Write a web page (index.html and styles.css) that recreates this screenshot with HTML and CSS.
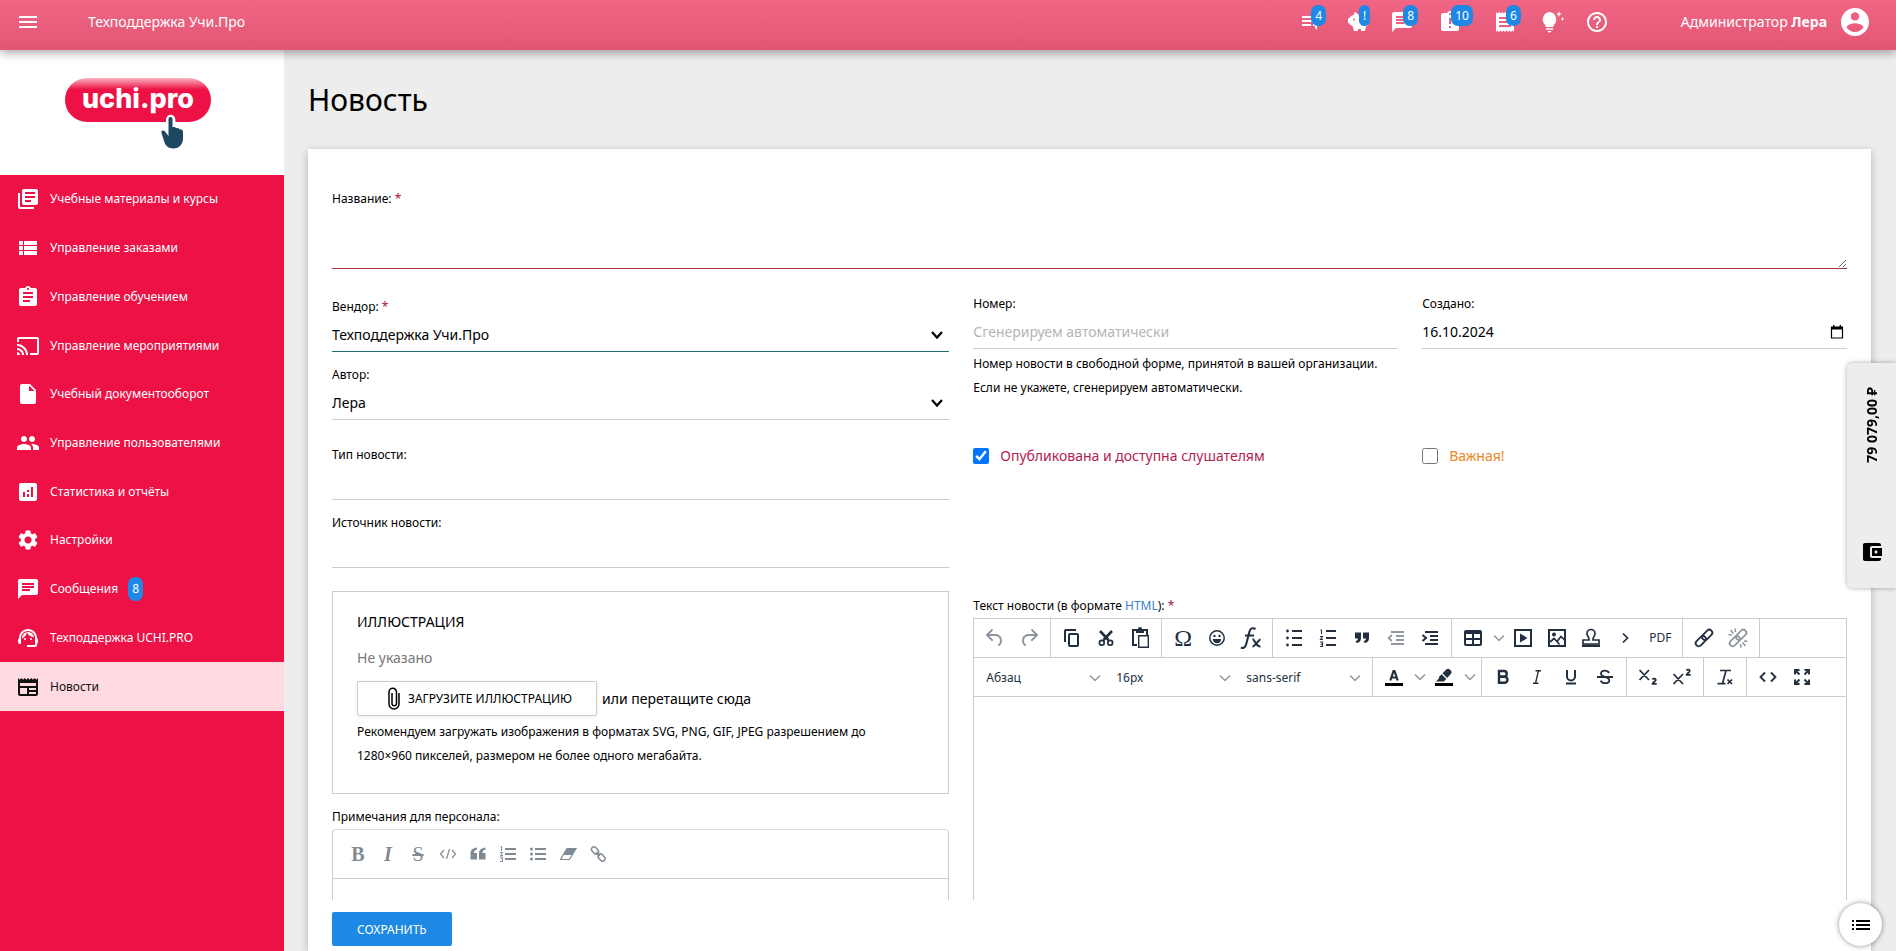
FILE: index.html
```html
<!DOCTYPE html>
<html lang="ru">
<head>
<meta charset="utf-8">
<title>Новость — Техподдержка Учи.Про</title>
<link rel="stylesheet" href="styles.css">
</head>
<body>
<svg class="sprite" aria-hidden="true">
  <symbol id="chat" viewBox="0 0 24 24"><path d="M20 2H4c-1.1 0-2 .9-2 2v18l4-4h14c1.1 0 2-.9 2-2V4c0-1.1-.9-2-2-2zM6 9h12v2H6V9zm8 5H6v-2h8v2zm4-6H6V6h12v2z"/></symbol>
  <symbol id="chevron" viewBox="0 0 12 12"><path d="M1 3.500l5 5 5-5" fill="none" stroke="currentColor" stroke-width="1.500"/></symbol>
  <symbol id="chevron-bold" viewBox="0 0 12 12"><path d="M1 3l5 5.500 5-5.500" fill="none" stroke="currentColor" stroke-width="2.200"/></symbol>
  <symbol id="link" viewBox="0 0 24 24"><g transform="rotate(-45 12 12)" fill="none" stroke="currentColor" stroke-width="1.800"><rect x="1.500" y="9" width="12" height="6" rx="3"/><rect x="10.500" y="9" width="12" height="6" rx="3"/></g></symbol>
</svg>

<header class="topbar">
  <button class="plain menu-button" type="button" aria-label="Меню"><svg class="icon" viewBox="0 0 24 24"><path d="M3 18h18v-2H3v2zm0-5h18v-2H3v2zm0-7v2h18V6H3z"/></svg></button>
  <a class="brand" href="#">Техподдержка Учи.Про</a>
  <nav class="tools" aria-label="Уведомления">
    <a class="tool" href="#"><svg class="icon" viewBox="0 0 24 24"><path d="M4 6h13v2H4zm0 4h13v2H4zm0 4h9v2H4zm11 0h5v2h-1v4l-2-2v-2h-2z"/></svg><span class="badge">4</span></a>
    <a class="tool" href="#"><svg class="icon" viewBox="0 0 24 24"><path d="M2 9.500c0-.8.500-1.500 1.500-1.700C4.500 6 6 5.200 8 5V3.500C8 2.500 9.200 2 10 2.700L13 5h3c3 0 5 2 5 5h1v5l-2 1.500-1 4.500h-4v-2h-3v2H8l-1.500-5C4.500 15 3.800 14.500 3.500 13.500L2 13z"/><circle cx="8" cy="9.500" r="1" fill="#e75f7e"/></svg><span class="badge">!</span></a>
    <a class="tool" href="#"><svg class="icon"><use href="#chat"/></svg><span class="badge">8</span></a>
    <a class="tool" href="#"><svg class="icon" viewBox="0 0 24 24"><path d="M19 3h-4.180C14.400 1.840 13.300 1 12 1s-2.400.84-2.820 2H5c-1.100 0-2 .9-2 2v14c0 1.100.9 2 2 2h14c1.100 0 2-.9 2-2V5c0-1.100-.9-2-2-2zm-6 15h-2v-2h2v2zm0-4h-2V8h2v6zm-1-9c-.55 0-1-.45-1-1s.45-1 1-1 1 .45 1 1-.45 1-1 1z"/></svg><span class="badge">10</span></a>
    <a class="tool" href="#"><svg class="icon" viewBox="0 0 24 24"><path d="M18 17H6v-2h12v2zm0-4H6v-2h12v2zm0-4H6V7h12v2zM3 22l1.500-1.500L6 22l1.500-1.500L9 22l1.500-1.500L12 22l1.500-1.500L15 22l1.500-1.500L18 22l1.500-1.500L21 22V2l-1.500 1.500L18 2l-1.500 1.500L15 2l-1.500 1.500L12 2l-1.500 1.500L9 2 7.500 3.500 6 2 4.500 3.500 3 2v20z"/></svg><span class="badge">6</span></a>
    <a class="tool" href="#" aria-label="Идеи"><svg class="icon" viewBox="0 0 24 24"><path d="M8.500 2a7.500 7.500 0 0 0-4 13.200V17h8v-1.800A7.500 7.500 0 0 0 8.500 2zM5 18.200h7v1.500H5zM6.500 21h4c-.5 1-1 1.500-2 1.500s-1.500-.5-2-1.500zM18 1l.8 2.200L21 4l-2.200.8L18 7l-.8-2.200L15 4l2.200-.8zM21.500 7l.6 1.400 1.400.6-1.400.6-.6 1.400-.6-1.400-1.400-.6 1.400-.6z"/></svg></a>
    <a class="tool" href="#" aria-label="Помощь"><svg class="icon" viewBox="0 0 24 24"><path d="M11 18h2v-2h-2v2zm1-16C6.480 2 2 6.480 2 12s4.480 10 10 10 10-4.480 10-10S17.520 2 12 2zm0 18c-4.410 0-8-3.590-8-8s3.590-8 8-8 8 3.590 8 8-3.590 8-8 8zm0-14c-2.210 0-4 1.790-4 4h2c0-1.100.9-2 2-2s2 .9 2 2c0 2-3 1.750-3 5h2c0-2.250 3-2.500 3-5 0-2.210-1.790-4-4-4z"/></svg></a>
  </nav>
  <a class="account" href="#"><span>Администратор <b>Лера</b></span><svg class="avatar" viewBox="2 2 20 20"><path d="M12 2C6.480 2 2 6.480 2 12s4.480 10 10 10 10-4.480 10-10S17.520 2 12 2zm0 3c1.660 0 3 1.340 3 3s-1.340 3-3 3-3-1.340-3-3 1.340-3 3-3zm0 14.200c-2.500 0-4.710-1.280-6-3.220.03-1.990 4-3.080 6-3.080 1.990 0 5.970 1.090 6 3.080-1.290 1.940-3.500 3.220-6 3.220z"/></svg></a>
</header>

<div class="layout">
  <aside class="sidebar">
    <a class="logo" href="#"><span class="logo-pill">uchi.pro</span>
      <svg class="logo-hand" viewBox="0 0 24 36"><path d="M8 14V5.500a2.700 2.700 0 0 1 5.400 0V12" fill="none" stroke="#fff" stroke-width="4"/><path d="M8.500 5a2 2 0 0 1 4 0v8.500c1-.8 3-.6 3.600.8 1.200-.7 3-.2 3.400 1.200 1.600-.5 3.500.5 3.500 2.500v6c0 6-3.500 10.500-9.500 10.500C8 34.500 5 31 4 27L1.500 19c-.4-1.600.2-2.500 1.300-2.500 1.200 0 2 .6 2.600 1.600l3.100 4z" fill="#1d4861"/></svg></a>
    <nav class="side-nav">
      <a href="#"><svg class="icon" viewBox="0 0 24 24"><path d="M4 6H2v14c0 1.100.9 2 2 2h14v-2H4V6zm16-4H8c-1.100 0-2 .9-2 2v12c0 1.100.9 2 2 2h12c1.100 0 2-.9 2-2V4c0-1.100-.9-2-2-2zm-1 9H9V9h10v2zm-4 4H9v-2h6v2zm4-8H9V5h10v2z"/></svg>Учебные материалы и курсы</a>
      <a href="#"><svg class="icon" viewBox="0 0 24 24"><path d="M3 14h4v-4H3v4zm0 5h4v-4H3v4zM3 9h4V5H3v4zm5 5h13v-4H8v4zm0 5h13v-4H8v4zM8 5v4h13V5H8z"/></svg>Управление заказами</a>
      <a href="#"><svg class="icon" viewBox="0 0 24 24"><path d="M19 3h-4.180C14.400 1.840 13.300 1 12 1c-1.300 0-2.400.84-2.820 2H5c-1.100 0-2 .9-2 2v14c0 1.100.9 2 2 2h14c1.100 0 2-.9 2-2V5c0-1.100-.9-2-2-2zm-7 0c.55 0 1 .45 1 1s-.45 1-1 1-1-.45-1-1 .45-1 1-1zm2 14H7v-2h7v2zm3-4H7v-2h10v2zm0-4H7V7h10v2z"/></svg>Управление обучением</a>
      <a href="#"><svg class="icon" viewBox="0 0 24 24"><path d="M21 3H3c-1.100 0-2 .9-2 2v3h2V5h18v14h-7v2h7c1.100 0 2-.9 2-2V5c0-1.100-.9-2-2-2zM1 18v3h3c0-1.660-1.340-3-3-3zm0-4v2c2.760 0 5 2.240 5 5h2c0-3.870-3.130-7-7-7zm0-4v2c4.970 0 9 4.030 9 9h2c0-6.080-4.930-11-11-11z"/></svg>Управление мероприятиями</a>
      <a href="#"><svg class="icon" viewBox="0 0 24 24"><path d="M6 2c-1.100 0-2 .9-2 2v16c0 1.100.9 2 2 2h12c1.100 0 2-.9 2-2V8l-6-6H6zm7 7V3.500L18.500 9H13z"/></svg>Учебный документооборот</a>
      <a href="#"><svg class="icon" viewBox="0 0 24 24"><path d="M16 11c1.660 0 3-1.340 3-3s-1.340-3-3-3-3 1.340-3 3 1.340 3 3 3zm-8 0c1.660 0 3-1.340 3-3S9.660 5 8 5 5 6.340 5 8s1.340 3 3 3zm0 2c-2.330 0-7 1.170-7 3.500V19h14v-2.500c0-2.330-4.670-3.500-7-3.500zm8 0c-.29 0-.62.02-.97.05 1.160.84 1.970 1.970 1.970 3.450V19h6v-2.500c0-2.330-4.670-3.500-7-3.500z"/></svg>Управление пользователями</a>
      <a href="#"><svg class="icon" viewBox="0 0 24 24"><path d="M19 3H5c-1.100 0-2 .9-2 2v14c0 1.100.9 2 2 2h14c1.100 0 2-.9 2-2V5c0-1.100-.9-2-2-2zM9 17H7v-5h2v5zm4 0h-2v-3h2v3zm0-5h-2v-2h2v2zm4 5h-2V7h2v10z"/></svg>Статистика и отчёты</a>
      <a href="#"><svg class="icon" viewBox="0 0 24 24"><path d="M19.140 12.940c.04-.3.06-.61.06-.94 0-.32-.02-.64-.07-.94l2.030-1.580c.18-.14.23-.41.12-.61l-1.920-3.320c-.12-.22-.37-.29-.59-.22l-2.390.96c-.5-.38-1.030-.7-1.620-.94l-.36-2.540c-.04-.24-.24-.41-.48-.41h-3.840c-.24 0-.43.17-.47.41l-.36 2.540c-.59.24-1.130.57-1.620.94l-2.390-.96c-.22-.08-.47 0-.59.22L2.740 8.870c-.12.21-.08.47.12.61l2.030 1.580c-.05.3-.09.63-.09.94s.02.64.07.94l-2.030 1.580c-.18.14-.23.41-.12.61l1.920 3.320c.12.22.37.29.59.22l2.390-.96c.5.38 1.030.7 1.620.94l.36 2.540c.05.24.24.41.48.41h3.840c.24 0 .44-.17.47-.41l.36-2.540c.59-.24 1.130-.56 1.620-.94l2.390.96c.22.08.47 0 .59-.22l1.920-3.320c.12-.22.07-.47-.12-.61l-2.010-1.580zM12 15.600c-1.980 0-3.600-1.620-3.600-3.600s1.620-3.600 3.600-3.600 3.600 1.620 3.600 3.600-1.620 3.600-3.600 3.600z"/></svg>Настройки</a>
      <a href="#"><svg class="icon"><use href="#chat"/></svg>Сообщения<span class="badge badge-nav">8</span></a>
      <a href="#"><svg class="icon" viewBox="0 0 24 24"><path d="M21 12.220C21 6.730 16.740 3 12 3c-4.690 0-9 3.650-9 9.280-.6.34-1 .98-1 1.720v2c0 1.100.9 2 2 2h1v-6.100c0-3.870 3.130-7 7-7s7 3.130 7 7V19h-8v2h8c1.100 0 2-.9 2-2v-1.220c.59-.31 1-.92 1-1.640v-2.300c0-.7-.41-1.310-1-1.620z"/><circle cx="9" cy="13" r="1"/><circle cx="15" cy="13" r="1"/><path d="M18 11.030C17.520 8.180 15.040 6 12.050 6c-3.030 0-6.290 2.510-6.030 6.450 2.470-1.010 4.330-3.210 4.860-5.890 1.310 2.630 4 4.440 7.120 4.470z"/></svg>Техподдержка UCHI.PRO</a>
      <a class="active" href="#" aria-current="page"><svg class="icon" viewBox="0 0 24 24"><path fill-rule="evenodd" d="M22 3l-1.670 1.670L18.670 3 17 4.670 15.330 3l-1.660 1.670L12 3l-1.670 1.670L8.670 3 7 4.670 5.330 3 3.670 4.670 2 3v16c0 1.100.9 2 2 2h16c1.100 0 2-.9 2-2V3zM11 19H4v-6h7v6zm9 0h-7v-2h7v2zm0-4h-7v-2h7v2zm0-4H4V8h16v3z"/></svg>Новости</a>
    </nav>
  </aside>

  <main class="content">
    <h1>Новость</h1>
    <form class="card">
      <div class="card-body">
        <div class="field full">
          <label class="label required" for="title">Название: <span class="star">*</span></label>
          <textarea class="control title-input" id="title"></textarea>
        </div>

        <div class="stack left">
          <div class="field">
            <label class="label required" for="vendor">Вендор: <span class="star">*</span></label>
            <span class="select-wrap"><select class="control valid" id="vendor"><option>Техподдержка Учи.Про</option></select><svg class="select-arrow"><use href="#chevron-bold"/></svg></span>
          </div>
          <div class="field">
            <label class="label" for="author">Автор:</label>
            <span class="select-wrap"><select class="control" id="author"><option>Лера</option></select><svg class="select-arrow"><use href="#chevron-bold"/></svg></span>
          </div>
        </div>
        <div class="pair right">
          <div class="field">
            <label class="label" for="number">Номер:</label>
            <input class="control" id="number" type="text" placeholder="Сгенерируем автоматически">
            <p class="hint number-hint">Номер новости в свободной форме, принятой в вашей организации. Если не укажете, сгенерируем автоматически.</p>
          </div>
          <div class="field">
            <label class="label" for="created">Создано:</label>
            <span class="select-wrap"><input class="control" id="created" type="text" value="16.10.2024"><svg class="date-icon" viewBox="0 0 14 14"><path d="M1.500 2.500h11v10.500h-11z" fill="none" stroke="#000" stroke-width="1.200"/><path d="M1 1.500h12v3H1zM3 0h1.400v2H3zM9.600 0H11v2H9.600z"/></svg></span>
          </div>
        </div>

        <div class="stack left">
          <div class="field">
            <label class="label" for="kind">Тип новости:</label>
            <input class="control" id="kind" type="text">
          </div>
          <div class="field">
            <label class="label" for="source">Источник новости:</label>
            <input class="control" id="source" type="text">
          </div>
        </div>
        <div class="pair right">
          <label class="check published"><input type="checkbox" checked>Опубликована и доступна слушателям</label>
          <label class="check important"><input type="checkbox">Важная!</label>
        </div>

        <div class="stack left">
          <section class="picture-box">
            <h2>ИЛЛЮСТРАЦИЯ</h2>
            <p class="empty">Не указано</p>
            <div class="upload"><button class="upload-button" type="button"><svg class="clip" viewBox="0 0 12 24"><path d="M11 6v11a5 5 0 0 1-10 0V5a3.500 3.500 0 0 1 7.500 0v11.500a2 2 0 0 1-4.500 0V6" fill="none" stroke="#000" stroke-width="1.500"/></svg>ЗАГРУЗИТЕ ИЛЛЮСТРАЦИЮ</button><span>или перетащите сюда</span></div>
            <p class="hint picture-hint">Рекомендуем загружать изображения в форматах SVG, PNG, GIF, JPEG разрешением до 1280×960 пикселей, размером не более одного мегабайта.</p>
          </section>
          <div class="field">
            <label class="label" for="notes">Примечания для персонала:</label>
            <div class="notes">
              <div class="notes-bar">
                <button class="plain serif-b" type="button">B</button>
                <button class="plain serif-i" type="button">I</button>
                <button class="plain serif-s" type="button">S</button>
                <button class="plain" type="button" aria-label="Код"><svg class="note-icon" viewBox="0 0 18 18"><path d="M5 5L1.500 9 5 13M13 5l3.500 4-3.500 4M10.500 4l-3 10" fill="none" stroke="currentColor" stroke-width="1.200"/></svg></button>
                <button class="plain" type="button" aria-label="Цитата"><svg class="note-icon" viewBox="0 0 18 18"><path d="M8 2.500v2C6 5 5 6 5 8h3v6.500H1.500V8C1.500 5 4 3 8 2.500zM16.500 2.500v2c-2 .5-3 1.500-3 3.500h3v6.500H10V8c0-3 2.500-5 6.500-5.500z"/></svg></button>
                <button class="plain" type="button" aria-label="Нумерованный список"><svg class="note-icon" viewBox="0 0 18 18"><path d="M6 3h11v2H6zm0 5h11v2H6zm0 5h11v2H6z"/><path d="M1.500 1.500h1V6M1 7.500h2.500L1.500 10.500H4M1 12h2.500l-1.300 1.800H3.500V16.500H1" fill="none" stroke="currentColor"/></svg></button>
                <button class="plain" type="button" aria-label="Список"><svg class="note-icon" viewBox="0 0 18 18"><path d="M6 3h11v2H6zm0 5h11v2H6zm0 5h11v2H6z"/><circle cx="2.500" cy="4" r="1.500"/><circle cx="2.500" cy="9" r="1.500"/><circle cx="2.500" cy="14" r="1.500"/></svg></button>
                <button class="plain" type="button" aria-label="Очистить"><svg class="note-icon" viewBox="0 0 18 18"><path d="M8 3h9.500l-4 7H4.500z"/><path d="M8 3.500h9L10.500 14.500H1.500z" fill="none" stroke="currentColor" stroke-width="1.200"/></svg></button>
                <button class="plain" type="button" aria-label="Ссылка"><svg class="note-icon" viewBox="0 0 18 18"><g fill="none" stroke="currentColor" stroke-width="1.500"><rect x="2" y="3" width="8" height="5" rx="2.500" transform="rotate(50 6 5.500)"/><rect x="8.500" y="10" width="8" height="5" rx="2.500" transform="rotate(50 12.500 12.500)"/><path d="M7 7l4 4"/></g></svg></button>
              </div>
              <textarea class="notes-text" id="notes"></textarea>
            </div>
          </div>
        </div>
        <div class="field right editor-field">
          <label class="label required" for="body">Текст новости (в формате <a href="#">HTML</a>): <span class="star">*</span></label>
          <div class="editor">
            <div class="bar">
              <div class="group">
                <button class="plain muted" type="button" aria-label="Отменить"><svg class="icon" viewBox="0 0 24 24"><path d="M6.400 8H12c3.700 0 6.200 2 6.800 5.100.6 2.700-.4 5.600-2.300 6.800a1 1 0 0 1-1-1.800c1.100-.6 1.800-2.700 1.400-4.600-.5-2.100-2.100-3.500-4.900-3.500H6.400l3.300 3.300a1 1 0 1 1-1.400 1.400l-5-5a1 1 0 0 1 0-1.400l5-5a1 1 0 0 1 1.400 1.400L6.400 8z"/></svg></button>
                <button class="plain muted" type="button" aria-label="Вернуть"><svg class="icon" viewBox="0 0 24 24"><path transform="matrix(-1 0 0 1 24 0)" d="M6.400 8H12c3.700 0 6.200 2 6.800 5.100.6 2.700-.4 5.600-2.300 6.800a1 1 0 0 1-1-1.800c1.100-.6 1.800-2.700 1.400-4.600-.5-2.100-2.100-3.500-4.900-3.500H6.400l3.300 3.300a1 1 0 1 1-1.400 1.400l-5-5a1 1 0 0 1 0-1.400l5-5a1 1 0 0 1 1.400 1.400L6.400 8z"/></svg></button>
              </div>
              <div class="group">
                <button class="plain" type="button" aria-label="Копировать"><svg class="icon" viewBox="0 0 24 24"><path d="M16 3H6a2 2 0 0 0-2 2v11h2V5h10V3zm1 4a2 2 0 0 1 2 2v10a2 2 0 0 1-2 2h-7a2 2 0 0 1-2-2V9c0-1.100.9-2 2-2h7zm0 12V9h-7v10h7z"/></svg></button>
                <button class="plain" type="button" aria-label="Вырезать"><svg class="icon" viewBox="0 0 24 24"><path d="M6 5l8.500 9M18 5l-8.500 9" fill="none" stroke="currentColor" stroke-width="2.600"/><g fill="none" stroke="currentColor" stroke-width="1.700"><circle cx="7.800" cy="16.800" r="2.400"/><circle cx="16.200" cy="16.800" r="2.400"/></g></svg></button>
                <button class="plain" type="button" aria-label="Вставить"><svg class="icon" viewBox="0 0 24 24"><path d="M9 19H5V4h14v5" fill="none" stroke="currentColor" stroke-width="2"/><path d="M8 3h2a2 2 0 0 1 4 0h2v4H8z"/><path d="M10.700 9.700h9.600v11.600h-9.600z" fill="none" stroke="currentColor" stroke-width="1.400"/></svg></button>
              </div>
              <div class="group">
                <button class="plain omega" type="button">Ω</button>
                <button class="plain" type="button" aria-label="Эмодзи"><svg class="icon" viewBox="0 0 24 24"><circle cx="12" cy="12" r="7.200" fill="none" stroke="currentColor" stroke-width="1.500"/><circle cx="9.500" cy="10" r="1.200"/><circle cx="14.500" cy="10" r="1.200"/><path d="M7.800 13h8.400a4.200 4.200 0 0 1-8.400 0z"/></svg></button>
                <button class="plain" type="button" aria-label="Формула"><svg class="icon" viewBox="0 0 24 24"><path d="M2 21.500c3 1.500 4.500-.5 5.500-4.500l3-11.500c.9-3.500 3.500-4 6-2.500M6 9.500h9M13.500 13c2 0 3 7.500 8 7.500M21.500 13.500c-2 0-5 7-8 7" fill="none" stroke="currentColor" stroke-width="2.100"/></svg></button>
              </div>
              <div class="group">
                <button class="plain" type="button" aria-label="Список"><svg class="icon" viewBox="0 0 24 24"><path d="M10 4h10v2H10zm0 7h10v2H10zm0 7h10v2H10z"/><circle cx="5.500" cy="5" r="1.400"/><circle cx="5.500" cy="12" r="1.400"/><circle cx="5.500" cy="19" r="1.400"/></svg></button>
                <button class="plain" type="button" aria-label="Нумерованный список"><svg class="icon" viewBox="0 0 24 24"><path d="M10 4h10v2H10zm0 7h10v2H10zm0 7h10v2H10z"/><path d="M4.500 4h1v4M4 10.500h2.500L4.500 13.500H7M4 16h2.500v4.500H4M4.500 18.200h2" fill="none" stroke="currentColor" stroke-width="1.100"/></svg></button>
                <button class="plain" type="button" aria-label="Цитата"><svg class="icon" viewBox="0 0 24 24"><path d="M5 6.500h6V12c0 3-1.500 4.500-4.500 5l-.8-1.700c1.500-.5 2.100-1.300 2.200-2.800H5zM13 6.500h6V12c0 3-1.500 4.500-4.500 5l-.8-1.700c1.500-.5 2.100-1.300 2.200-2.800H13z"/></svg></button>
                <button class="plain muted" type="button" aria-label="Уменьшить отступ"><svg class="icon" viewBox="0 0 24 24"><path d="M7 5h13v2H7zm5 4h8v2h-8zm0 4h8v2h-8zm-5 4h13v2H7z"/><path d="M8 9l-3.500 3L8 15" fill="none" stroke="currentColor" stroke-width="1.700"/></svg></button>
                <button class="plain" type="button" aria-label="Увеличить отступ"><svg class="icon" viewBox="0 0 24 24"><path d="M7 5h13v2H7zm5 4h8v2h-8zm0 4h8v2h-8zm-5 4h13v2H7z"/><path d="M4.500 9L8 12l-3.500 3" fill="none" stroke="currentColor" stroke-width="2"/></svg></button>
              </div>
              <div class="group">
                <button class="plain split" type="button" aria-label="Таблица"><svg class="icon" viewBox="0 0 24 24"><path fill-rule="evenodd" d="M19 4a2 2 0 0 1 2 2v12a2 2 0 0 1-2 2H5a2 2 0 0 1-2-2V6c0-1.100.9-2 2-2h14zM5 14v4h6v-4H5zm14 0h-6v4h6v-4zm0-6h-6v4h6V8zM5 12h6V8H5v4z"/></svg><svg class="chev"><use href="#chevron"/></svg></button>
                <button class="plain" type="button" aria-label="Медиа"><svg class="icon" viewBox="0 0 24 24"><path d="M4 4h16v16H4z" fill="none" stroke="currentColor" stroke-width="2"/><path d="M9 7.500l7.500 4.500L9 16.500z"/></svg></button>
                <button class="plain" type="button" aria-label="Изображение"><svg class="icon" viewBox="0 0 24 24"><path d="M4 4h16v16H4z" fill="none" stroke="currentColor" stroke-width="2"/><circle cx="9" cy="8.500" r="2"/><path d="M5 16l4-3.500 3 3 4-5 4 4M12 15.500l2.500 3" fill="none" stroke="currentColor" stroke-width="1.700"/></svg></button>
                <button class="plain" type="button" aria-label="Печать"><svg class="icon" viewBox="0 0 24 24"><path d="M10 14v-1c0-2-2-3-2-5.500a4 4 0 0 1 8 0c0 2.500-2 3.500-2 5.500v1h6v4H4v-4z" fill="none" stroke="currentColor" stroke-width="1.700"/><path d="M3 18.500h18V21H3z"/></svg></button>
                <button class="plain" type="button" aria-label="Далее"><svg class="icon" viewBox="0 0 24 24"><path d="M10 7.500l4.500 4.500-4.500 4.500" fill="none" stroke="currentColor" stroke-width="1.700"/></svg></button>
                <button class="plain pdf" type="button">PDF</button>
              </div>
              <div class="group">
                <button class="plain" type="button" aria-label="Ссылка"><svg class="icon" viewBox="0 0 24 24"><use href="#link"/></svg></button>
                <button class="plain muted" type="button" aria-label="Убрать ссылку"><svg class="icon" viewBox="0 0 24 24"><use href="#link"/><path d="M4.500 4l3 3.500M9 2.500l.5 3.500M2.500 8.500L6 9M19.500 20l-3-3.500M15 21.500l-.5-3.500M21.500 15.500L18 15" fill="none" stroke="currentColor" stroke-width="1.600"/></svg></button>
              </div>
            </div>
            <div class="bar">
              <div class="group">
                <span class="bar-select"><select aria-label="Стиль"><option>Абзац</option></select><svg class="chev"><use href="#chevron"/></svg></span>
                <span class="bar-select"><select aria-label="Размер"><option>16px</option></select><svg class="chev"><use href="#chevron"/></svg></span>
                <span class="bar-select"><select aria-label="Шрифт"><option>sans-serif</option></select><svg class="chev"><use href="#chevron"/></svg></span>
              </div>
              <div class="group">
                <button class="plain split" type="button" aria-label="Цвет текста"><svg class="icon" viewBox="0 0 24 24"><path d="M3 18h18v3H3z" fill="#000"/><path d="M8.300 15.500L11.500 6h1l3.200 9.500M9.300 12.500h5.400" fill="none" stroke="currentColor" stroke-width="2.200"/></svg><svg class="chev"><use href="#chevron"/></svg></button>
                <button class="plain split" type="button" aria-label="Цвет фона"><svg class="icon" viewBox="0 0 24 24"><path d="M3 18h18v3H3z" fill="#000"/><path d="M8 16.500H4l3-3.200c-.3-.8 0-1.500.6-2.100l2-2 4.700 4.700-2 2c-.7.700-1.500.9-2.300.600zM10.500 8.300l3.800-3.700c1-1 2.500-1 3.500 0l1 1c1 1 1 2.500 0 3.500L15.200 13z"/></svg><svg class="chev"><use href="#chevron"/></svg></button>
              </div>
              <div class="group">
                <button class="plain" type="button" aria-label="Полужирный"><svg class="icon" viewBox="0 0 24 24"><path d="M8 6h5a2.700 2.700 0 0 1 0 5.500H8zM8 11.700h5.500a3 3 0 0 1 0 6H8z" fill="none" stroke="currentColor" stroke-width="2.400"/></svg></button>
                <button class="plain" type="button" aria-label="Курсив"><svg class="icon" viewBox="0 0 24 24"><path d="M10.500 5.700H16M8 18.300h5.500M13.500 5.700L10.500 18.300" fill="none" stroke="currentColor" stroke-width="1.400"/></svg></button>
                <button class="plain" type="button" aria-label="Подчёркнутый"><svg class="icon" viewBox="0 0 24 24"><path d="M8 5v6.500a4 4 0 0 0 8 0V5M7 18.500h10" fill="none" stroke="currentColor" stroke-width="2"/></svg></button>
                <button class="plain" type="button" aria-label="Зачёркнутый"><svg class="icon" viewBox="0 0 24 24"><path d="M4 12h16M16 8c-.8-1.700-2.200-2.300-4-2.300-2.300 0-4 1-4 2.900 0 4.500 8.300 2.400 8.300 6.600 0 2-1.800 3-4.300 3-2 0-3.600-.8-4.400-2.600" fill="none" stroke="currentColor" stroke-width="1.800"/></svg></button>
              </div>
              <div class="group">
                <button class="plain" type="button" aria-label="Нижний индекс"><svg class="icon" viewBox="0 0 24 24"><path d="M3.500 5l9.500 10M13 5L3.500 15M16.500 14.500c.8-1.400 3.500-1 3.200.6-.2 1.200-2.700 2.200-3 3.700h4" fill="none" stroke="currentColor" stroke-width="1.800"/></svg></button>
                <button class="plain" type="button" aria-label="Верхний индекс"><svg class="icon" viewBox="0 0 24 24"><path d="M3.500 9l9.500 10M13 9L3.500 19M16.500 5.500c.8-1.400 3.500-1 3.200.6-.2 1.200-2.700 2.200-3 3.700h4" fill="none" stroke="currentColor" stroke-width="1.800"/></svg></button>
              </div>
              <div class="group">
                <button class="plain" type="button" aria-label="Очистить формат"><svg class="icon" viewBox="0 0 24 24"><path d="M7 5.500h11M13 5.500L9.500 18.500M4.500 18.700h8M14.500 14.500l4.500 4.500M19 14.500L14.500 19" fill="none" stroke="currentColor" stroke-width="1.700"/></svg></button>
              </div>
              <div class="group last">
                <button class="plain" type="button" aria-label="Исходный код"><svg class="icon" viewBox="0 0 24 24"><path d="M9 7.500L4.500 12 9 16.500M15 7.500l4.500 4.500-4.500 4.500" fill="none" stroke="currentColor" stroke-width="1.800"/></svg></button>
                <button class="plain" type="button" aria-label="Полный экран"><svg class="icon" viewBox="0 0 24 24"><path d="M5 9.500V5h4.500M14.500 5H19v4.500M19 14.500V19h-4.500M9.500 19H5v-4.500M5 5l4.500 4.500M19 5l-4.500 4.500M19 19l-4.500-4.500M5 19l4.500-4.500" fill="none" stroke="currentColor" stroke-width="1.900"/></svg></button>
              </div>
            </div>
            <textarea class="editor-text" id="body"></textarea>
          </div>
        </div>
      </div>
      <footer class="card-footer"><button class="save" type="submit">СОХРАНИТЬ</button></footer>
    </form>
  </main>
</div>

<a class="balance" href="#"><span class="balance-sum">79 079,00 ₽</span><svg class="icon" viewBox="0 0 24 24"><path d="M21 18v1c0 1.100-.9 2-2 2H5c-1.110 0-2-.9-2-2V5c0-1.100.89-2 2-2h14c1.100 0 2 .9 2 2v1h-9c-1.110 0-2 .9-2 2v8c0 1.100.89 2 2 2h9zm-9-2h10V8H12v8zm4-2.500c-.83 0-1.500-.67-1.500-1.500s.67-1.500 1.500-1.500 1.500.67 1.500 1.500-.67 1.500-1.500 1.500z"/></svg></a>
<button class="plain fab" type="button" aria-label="Содержание"><svg class="icon" viewBox="0 0 24 24"><path d="M7 7h14v2H7zm0 4h14v2H7zm0 4h14v2H7zM3 7h2v2H3zm0 4h2v2H3zm0 4h2v2H3z"/></svg></button>
</body>
</html>
```
FILE: styles.css
```css
* { box-sizing: border-box; }

body {
  margin: 0;
  height: 100vh;
  display: flex;
  flex-direction: column;
  overflow: hidden;
  background: #ededed;
  color: #000;
  font: 14px/24px "Noto Sans", "Open Sans", sans-serif;
}

a { color: inherit; text-decoration: none; }
h1, h2, p { margin: 0; font-weight: 400; }

.sprite { position: absolute; width: 0; height: 0; }
.icon { width: 24px; height: 24px; flex: none; fill: currentColor; }

.plain {
  display: inline-flex;
  align-items: center;
  justify-content: center;
  padding: 0;
  border: 0;
  background: none;
  color: inherit;
  font: inherit;
}

/* Top bar */
.topbar {
  position: relative;
  z-index: 2;
  flex: none;
  display: flex;
  align-items: center;
  height: 50px;
  padding: 0 27px 6px 16px;
  color: #fff;
  background: linear-gradient(#f16685, #e25674);
  box-shadow: 0 2px 10px rgba(0, 0, 0, .4);
}
.brand { margin-left: 48px; }
.tools { display: flex; gap: 20px; margin-left: auto; }
.tool { display: flex; align-items: flex-start; }
.badge {
  margin: -5px 0 0 -11px;
  padding: 0 4px;
  height: 21px;
  border-radius: 7px;
  background: #1e88e5;
  color: #fff;
  font-size: 12px;
  line-height: 21px;
}
.account { display: flex; align-items: center; gap: 14px; margin-left: 72px; }
.avatar { width: 28px; height: 28px; fill: #fff; }

/* Sidebar */
.layout { flex: 1; min-height: 0; display: flex; }
.sidebar { flex: none; width: 284px; background: #ed1145; }
.logo { position: relative; display: block; height: 125px; padding: 28px 73px 0 65px; background: #fff; }
.logo-pill {
  display: block;
  height: 44px;
  border-radius: 22px;
  background: linear-gradient(#fbb3c2, #ed1145 26%);
  color: #fff;
  font: 800 27px/42px Inter, sans-serif;
  text-align: center;
}
.logo-hand { position: absolute; left: 160px; top: 64px; width: 24px; height: 36px; overflow: visible; }
.side-nav { display: grid; grid-auto-rows: 1fr; height: 536px; color: #fff; font-size: 12px; }
.side-nav a { display: flex; align-items: center; gap: 10px; padding: 0 16px; }
.side-nav .active { background: #ffdbe1; color: #111; }
.badge-nav { margin: 0; height: 24px; line-height: 24px; }

/* Page */
.content { flex: 1; min-width: 0; display: flex; flex-direction: column; padding: 24px 25px 0 24px; }
h1 { height: 75px; font-size: 30px; line-height: 52px; }
.card {
  flex: 1;
  min-height: 0;
  display: flex;
  flex-direction: column;
  background: #fff;
  box-shadow: 0 2px 8px rgba(0, 0, 0, .25);
}
.card-body {
  flex: 1;
  min-height: 0;
  display: grid;
  grid-template-columns: repeat(12, minmax(0, 1fr));
  align-content: start;
  gap: 23px 24px;
  padding: 35px 24px 0;
  overflow: hidden auto;
  scrollbar-width: none;
}
.full { grid-column: 1 / -1; }
.left { grid-column: span 5; }
.right { grid-column: span 7; }
.stack { display: flex; flex-direction: column; gap: 11px; }
.pair { display: grid; grid-template-columns: 1fr 1fr; gap: 24px; align-items: start; }
.field { display: flex; flex-direction: column; }
.label { font-size: 12px; }
.label a { color: #3a7fc8; }
.required { padding-top: 3px; }
.star { color: #a3123f; line-height: 12px; }
.control {
  display: block;
  width: 100%;
  height: 33px;
  padding: 0 0 1px;
  border: 0;
  border-bottom: 1px solid #ccc;
  border-radius: 0;
  outline: 0;
  background: none;
  color: #000;
  font: inherit;
  appearance: none;
}
.control::placeholder { color: #b5b5b5; }
.title-input { height: 58px; border-bottom-color: #a33a3a; resize: vertical; }
.valid { border-bottom-color: #1f6f7a; }
.select-wrap { position: relative; display: block; }
.select-arrow { position: absolute; right: 6px; top: 10px; width: 12px; height: 12px; pointer-events: none; }
.date-icon { position: absolute; right: 3px; top: 9px; width: 14px; height: 14px; }
.hint { font-size: 12px; }
.number-hint { margin-top: 3px; }
.picture-hint { padding-right: 24px; }
.check { display: flex; align-items: center; gap: 11px; height: 26px; }
.check input { width: 16px; height: 16px; margin: 0; accent-color: #0075ff; }
.published { color: #b01e50; }
.important { color: #e8871e; }

/* Picture upload */
.picture-box { padding: 18px 24px 25px; border: 1px solid #ccc; }
h2 { font-size: 14px; line-height: 24px; }
.empty { margin: 12px 0 11px; color: #777; }
.upload { display: flex; align-items: center; gap: 5px; margin-bottom: 4px; }
.upload-button {
  display: flex;
  align-items: center;
  gap: 8px;
  height: 35px;
  padding: 0 24px 0 30px;
  border: 1px solid #ccc;
  border-radius: 2px;
  background: #fff;
  color: #000;
  font-family: inherit;
  font-size: 12px;
  box-shadow: 0 1px 4px rgba(0, 0, 0, .08);
}
.clip { width: 12px; height: 24px; }

/* Staff notes */
.notes { border: 1px solid #ccc; border-top-color: #ddd; border-radius: 4px; }
.notes-bar { display: flex; align-items: center; height: 49px; padding: 0 10px; border-bottom: 1px solid #ccc; color: #808a94; }
.notes-bar .plain { width: 30px; }
.note-icon { width: 18px; height: 18px; fill: currentColor; }
.serif-b, .serif-i, .serif-s { font: 700 20px/24px "Liberation Serif", serif; }
.serif-i { font-style: italic; }
.serif-s { font-weight: 400; text-decoration: line-through; }
.notes-text, .editor-text { display: block; width: 100%; border: 0; outline: 0; resize: none; background: none; font: inherit; }
.notes-text { height: 96px; }

/* Rich text editor */
.editor { border: 1px solid #ccc; color: #222f3e; }
.bar { display: flex; height: 39px; border-bottom: 1px solid #ccc; }
.group { display: flex; align-items: center; padding: 0 4px; border-right: 1px solid #ccc; }
.group.last { border-right: 0; }
.group .plain { width: 34px; height: 34px; }
.group .split { width: 50px; padding-left: 5px; justify-content: flex-start; gap: 8px; }
.group .muted { color: #9298a0; }
.group .omega { font: 24px/34px "Liberation Serif", serif; }
.group .pdf { width: 36px; font-size: 12px; }
.chev { width: 12px; height: 12px; flex: none; color: #9298a0; }
.bar-select { position: relative; width: 130px; }
.bar-select select { display: block; width: 100%; height: 34px; padding: 0 8px; border: 0; background: none; color: inherit; font: 12px "Noto Sans", sans-serif; appearance: none; }
.bar-select .chev { position: absolute; right: 7px; top: 12px; pointer-events: none; }
.editor-text { height: 320px; }

.card-footer { flex: none; padding: 12px 24px 5px; background: #fff; }
.save { display: block; height: 34px; padding: 0 25px; border: 0; border-radius: 2px; background: #1e88e5; color: #fff; font: 12px "Noto Sans", sans-serif; }

/* Floating controls */
.balance {
  position: fixed;
  z-index: 3;
  right: 0;
  top: 363px;
  display: flex;
  flex-direction: column;
  align-items: center;
  justify-content: space-between;
  width: 49px;
  height: 225px;
  padding: 24px 0;
  border-radius: 6px 0 0 6px;
  background: #ededed;
  box-shadow: 0 0 5px rgba(0, 0, 0, .35);
}
.balance-sum { writing-mode: vertical-rl; rotate: 180deg; font-weight: 700; }
.fab {
  position: fixed;
  z-index: 3;
  right: 14px;
  bottom: 5px;
  width: 43px;
  height: 43px;
  border-radius: 50%;
  background: #fff;
  box-shadow: 0 0 5px rgba(0, 0, 0, .45);
}
```
